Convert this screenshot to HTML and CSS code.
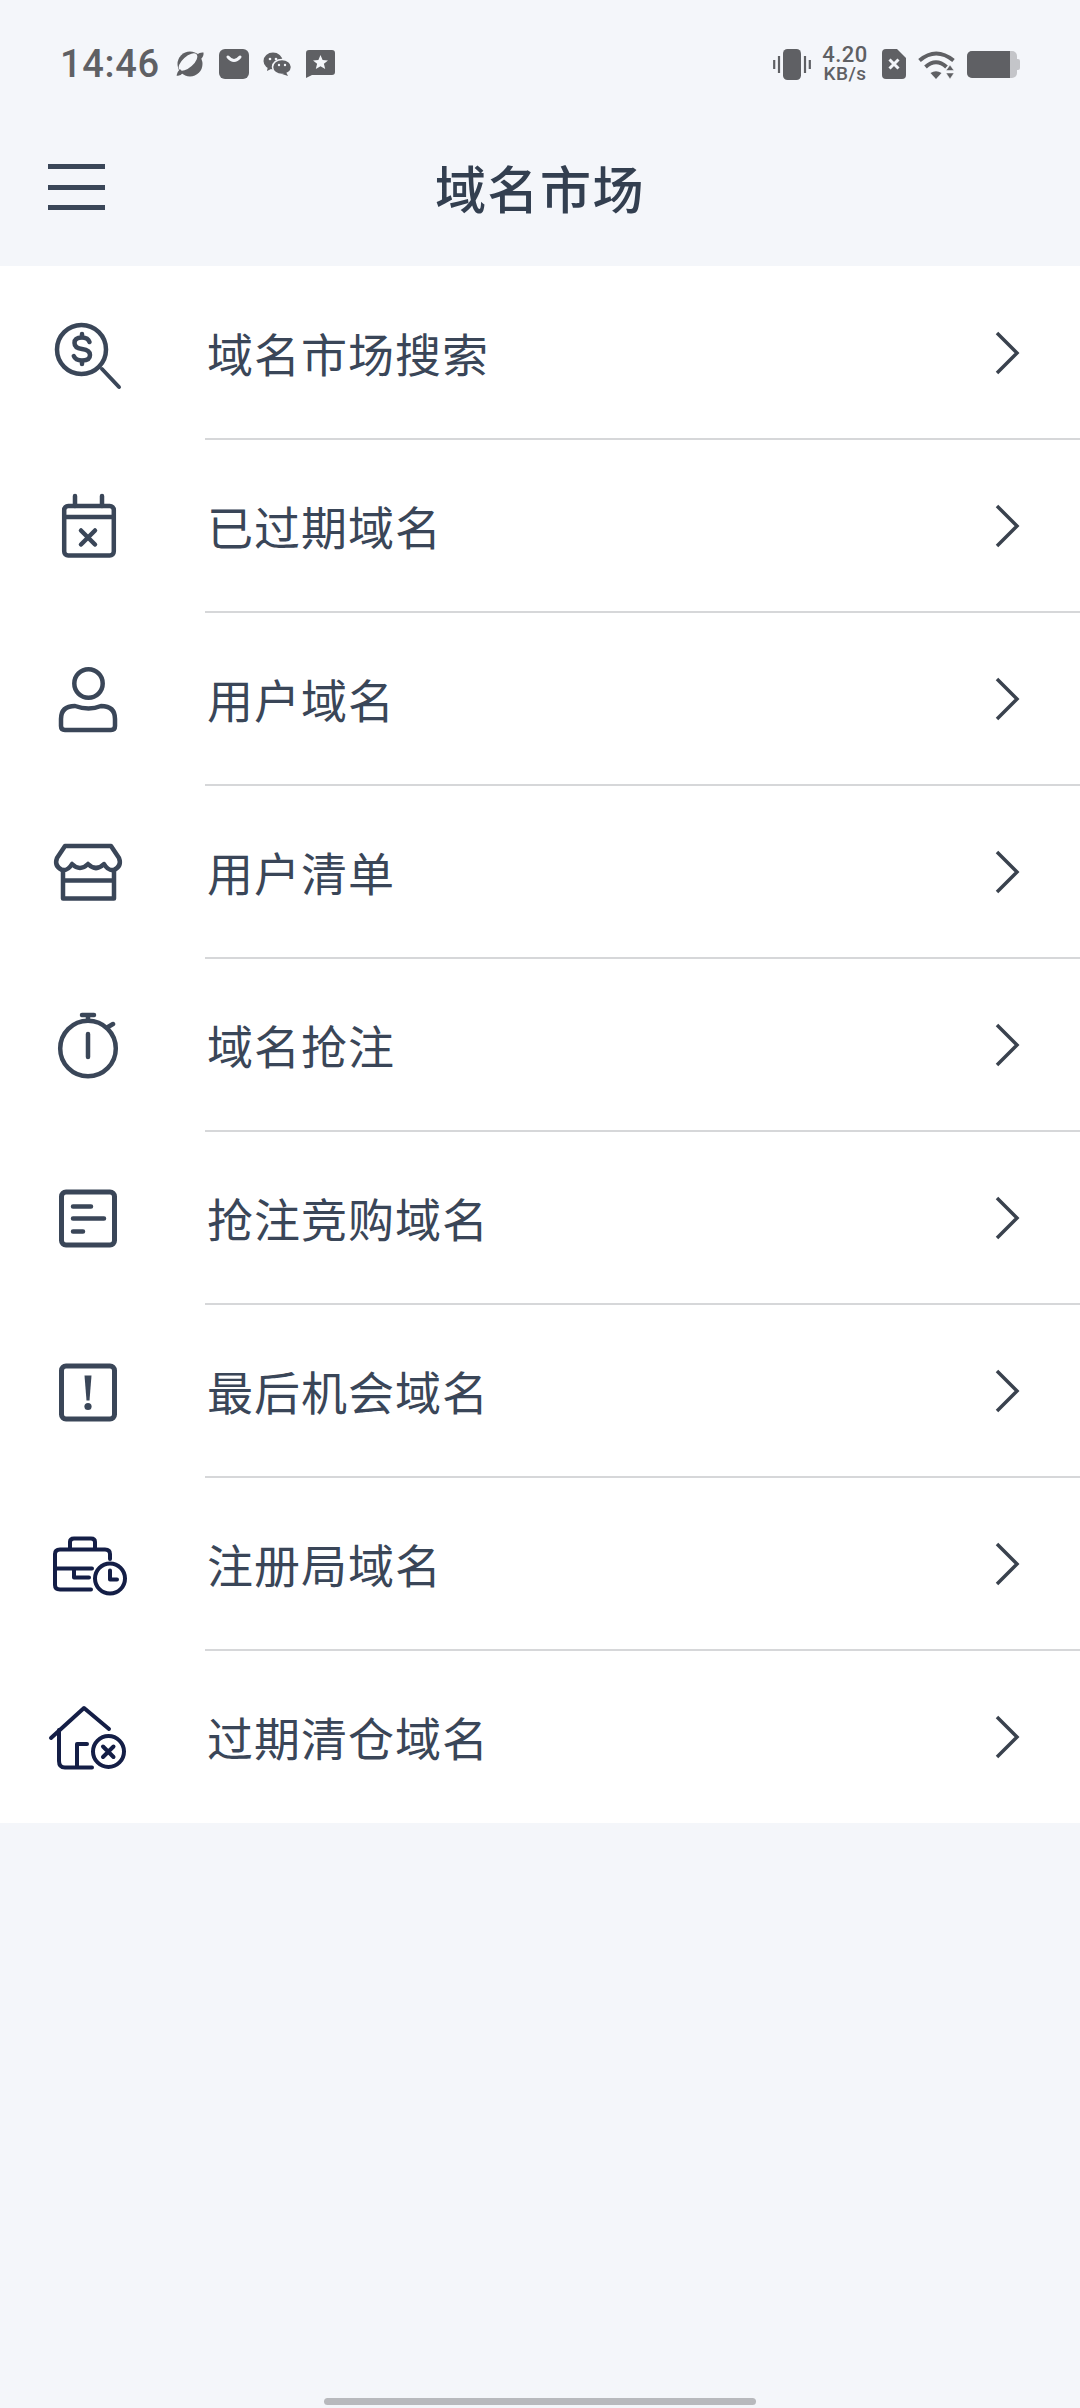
FILE: index.html
```html
<!DOCTYPE html>
<html lang="zh-CN">

<head>
    <meta charset="UTF-8" />
    <meta name="viewport" content="width=device-width, initial-scale=1.0" />
    <title>域名市场</title>
    <link rel="stylesheet" href="styles.css">
</head>

<body>
    <div class="status-bar">
        <div class="status-left">
            <span class="clock">14:46</span>
            <svg class="s-planet" viewBox="0 0 28 26"><circle cx="14" cy="13" r="12.500" fill="#5f6064"/><ellipse cx="12" cy="11" rx="11.500" ry="5.500" transform="rotate(-42 12 11)" fill="#f4f6fa"/><path d="M0.500 24.500 Q1 21 4 18 L7 22 Q4 25.500 0.500 24.500 Z M27.500 1.500 Q28 5 25 8 L21 3.500 Q24 1 27.500 1.500 Z" fill="#5f6064"/></svg>
            <svg class="s-bag" viewBox="0 0 30 30"><rect width="30" height="30" rx="6" fill="#5f6064"/><path d="M9 8 Q15 15 21 8" fill="none" stroke="#f4f6fa" stroke-width="3" stroke-linecap="round"/></svg>
            <svg class="s-wechat" viewBox="0 0 28 24"><ellipse cx="10" cy="9" rx="9.500" ry="8.500" fill="#5f6064"/><path d="M5 14 L4 19 L10 16 Z" fill="#5f6064"/><ellipse cx="19" cy="15" rx="9.500" ry="7.500" fill="#5f6064" stroke="#f4f6fa" stroke-width="1.500"/><path d="M23 20 L25 24 L19 22 Z" fill="#5f6064"/><circle cx="7" cy="7" r="1.300" fill="#f4f6fa"/><circle cx="13" cy="7" r="1.300" fill="#f4f6fa"/><circle cx="16" cy="13" r="1.200" fill="#f4f6fa"/><circle cx="22" cy="13" r="1.200" fill="#f4f6fa"/></svg>
            <svg class="s-msg" viewBox="0 0 29 28"><path d="M3 0 H26 Q29 0 29 3 V22 Q29 25 26 25 H6 L0 28 V3 Q0 0 3 0 Z" fill="#5f6064"/><path d="M14.500 5 L16.600 10 L22 10.400 L17.900 13.800 L19.200 19 L14.500 16.200 L9.800 19 L11.100 13.800 L7 10.400 L12.400 10 Z" fill="#f4f6fa"/></svg>
        </div>
        <div class="status-right">
            <svg class="s-vibrate" viewBox="0 0 38 31"><rect x="10" y="0" width="18" height="31" rx="4.500" fill="#5f6064"/><path d="M1.200 11 V20 M6 7 V24 M32 7 V24 M36.800 11 V20" stroke="#5f6064" stroke-width="2.200"/></svg>
            <div class="net-speed"><span>4.20</span><span class="net-unit">KB/s</span></div>
            <svg class="s-sim" viewBox="0 0 24 30"><path d="M4 0 H15 L24 9 V26 Q24 30 20 30 H4 Q0 30 0 26 V4 Q0 0 4 0 Z" fill="#5f6064"/><path d="M7.500 10.500 L16.500 19.500 M16.500 10.500 L7.500 19.500" stroke="#f4f6fa" stroke-width="3"/></svg>
            <svg class="s-wifi" viewBox="0 0 37 29"><g fill="none" stroke="#5f6064" stroke-width="4"><path d="M1.500 10.500 Q18 -3.500 35.500 10.500"/><path d="M7.500 17 Q18 7.500 28.500 17"/></g><path d="M12.500 23 Q18 19.500 23.500 23 L18 29 Z" fill="#5f6064"/><path d="M32 15 L36 20.500 H28 Z M28 23 H36 L32 29 Z" fill="#5f6064" stroke="#f4f6fa" stroke-width="0.500"/></svg>
            <div class="battery"><div class="battery-fill"></div></div>
        </div>
    </div>

    <header class="app-bar">
        <div class="menu-btn"><span></span><span></span><span></span></div>
        <h1>域名市场</h1>
    </header>

    <ul class="menu-list">
        <li class="menu-row">
            <svg class="row-icon" viewBox="0 0 80 80"><g fill="none" stroke="#3a4658" stroke-width="4.500" stroke-linecap="round" stroke-linejoin="round"><circle cx="33.500" cy="36.500" r="24.500"/><path d="M54 56 L71 74" stroke-width="4"/><path d="M41.500 29 Q40 24.500 34 24.500 Q26.500 24.500 26.500 30 Q26.500 35 34 36 Q42 37 42 42 Q42 47.500 34 47.500 Q27.500 47.500 25.800 43"/><path d="M34 21 V24 M34 48 V51"/></g></svg>
            <span class="row-label">域名市场搜索</span>
            <svg class="chevron" viewBox="0 0 26 44"><path d="M3 2 L23 22 L3 42" fill="none" stroke="#3a424e" stroke-width="3.500"/></svg>
        </li>
        <li class="menu-row">
            <svg class="row-icon" viewBox="0 0 80 80"><g fill="none" stroke="#3a4658" stroke-width="4.500" stroke-linecap="round" stroke-linejoin="round"><rect x="16.200" y="20" width="49.600" height="49.600" rx="4"/><path d="M16.200 31 H65.800 M27 10 V20 M54 10 V20"/><path d="M33 44.500 L47 58.500 M47 44.500 L33 58.500"/></g></svg>
            <span class="row-label">已过期域名</span>
            <svg class="chevron" viewBox="0 0 26 44"><path d="M3 2 L23 22 L3 42" fill="none" stroke="#3a424e" stroke-width="3.500"/></svg>
        </li>
        <li class="menu-row">
            <svg class="row-icon" viewBox="0 0 80 80"><g fill="none" stroke="#3a4658" stroke-width="4.500" stroke-linejoin="round"><circle cx="40.500" cy="24.500" r="14.200"/><path d="M17 71 Q13 71 13 67 V60 Q13 47 27 47 Q34 49.500 40.500 49.500 Q47 49.500 53 47 Q67 47 67 60 V67 Q67 71 63 71 Z"/></g></svg>
            <span class="row-label">用户域名</span>
            <svg class="chevron" viewBox="0 0 26 44"><path d="M3 2 L23 22 L3 42" fill="none" stroke="#3a424e" stroke-width="3.500"/></svg>
        </li>
        <li class="menu-row">
            <svg class="row-icon" viewBox="0 0 80 80"><g fill="none" stroke="#3a4658" stroke-width="4.500" stroke-linecap="round" stroke-linejoin="round"><path d="M17 14 H63 L71 26 Q74 34 66 38 Q60 39 56 32 Q48 40 40 32 Q32 40 24 32 Q20 39 14 38 Q6 34 9 26 Z"/><path d="M15 38 V66.500 H66 V38 M15 48.500 H66"/></g></svg>
            <span class="row-label">用户清单</span>
            <svg class="chevron" viewBox="0 0 26 44"><path d="M3 2 L23 22 L3 42" fill="none" stroke="#3a424e" stroke-width="3.500"/></svg>
        </li>
        <li class="menu-row">
            <svg class="row-icon" viewBox="0 0 80 80"><g fill="none" stroke="#3a4658" stroke-width="4.500" stroke-linecap="round"><circle cx="40" cy="43.500" r="27.800"/><path d="M40 15 V10 M34 10 H46 M60 22 L65 19 M40 29 V52"/></g></svg>
            <span class="row-label">域名抢注</span>
            <svg class="chevron" viewBox="0 0 26 44"><path d="M3 2 L23 22 L3 42" fill="none" stroke="#3a424e" stroke-width="3.500"/></svg>
        </li>
        <li class="menu-row">
            <svg class="row-icon" viewBox="0 0 80 80"><g fill="none" stroke="#3a4658" stroke-width="5" stroke-linecap="round"><rect x="13.500" y="14" width="53" height="53" rx="4.500"/><path d="M25 28.500 H43 M25 40.500 H56 M25 53.500 H35" stroke-width="4.500"/></g></svg>
            <span class="row-label">抢注竞购域名</span>
            <svg class="chevron" viewBox="0 0 26 44"><path d="M3 2 L23 22 L3 42" fill="none" stroke="#3a424e" stroke-width="3.500"/></svg>
        </li>
        <li class="menu-row">
            <svg class="row-icon" viewBox="0 0 80 80"><rect x="13.500" y="15" width="53" height="53" rx="4.500" fill="none" stroke="#3a4658" stroke-width="5"/><path d="M36.500 24.500 H43.500 L41.500 49.500 H38.500 Z" fill="#3a4658"/><circle cx="40" cy="55.500" r="3.600" fill="#3a4658"/></svg>
            <span class="row-label">最后机会域名</span>
            <svg class="chevron" viewBox="0 0 26 44"><path d="M3 2 L23 22 L3 42" fill="none" stroke="#3a424e" stroke-width="3.500"/></svg>
        </li>
        <li class="menu-row">
            <svg class="row-icon" viewBox="0 0 80 80"><g fill="none" stroke="#141e46" stroke-width="4" stroke-linecap="round" stroke-linejoin="round"><path d="M62 35 V30 Q62 25.500 57 25.500 H12 Q7 25.500 7 30 V61 Q7 65.500 12 65.500 H43"/><path d="M7 44.500 H44 M26 44.500 V53.500 H41 M22 25 V18 Q22 14.500 26 14.500 H43 Q47 14.500 47 18 V25"/><circle cx="62" cy="54.500" r="15"/><path d="M62 46.500 V55.500 H69"/></g></svg>
            <span class="row-label">注册局域名</span>
            <svg class="chevron" viewBox="0 0 26 44"><path d="M3 2 L23 22 L3 42" fill="none" stroke="#3a424e" stroke-width="3.500"/></svg>
        </li>
        <li class="menu-row">
            <svg class="row-icon" viewBox="0 0 80 80"><g fill="none" stroke="#141e46" stroke-width="4" stroke-linecap="round" stroke-linejoin="round"><path d="M3 41 L36 11 L61 32"/><path d="M11 33 V64 Q11 70.500 17 70.500 H44 M29 70.500 V47 H39"/><circle cx="60.500" cy="54.500" r="15.500"/><path d="M55 49.500 L65.500 60 M65.500 49.500 L55 60"/></g></svg>
            <span class="row-label">过期清仓域名</span>
            <svg class="chevron" viewBox="0 0 26 44"><path d="M3 2 L23 22 L3 42" fill="none" stroke="#3a424e" stroke-width="3.500"/></svg>
        </li>
    </ul>

    <div class="home-bar"></div>
</body>

</html>
```

FILE: styles.css
```css
* {
    box-sizing: border-box;
}

body {
    font-family: "Noto Sans CJK SC", "Noto Sans", sans-serif;
    margin: 0;
    width: 1080px;
    height: 2408px;
    background-color: #f4f6fa;
    color: #3a4658;
    display: flex;
    flex-direction: column;
    overflow: hidden;
}

/* status bar */
.status-bar {
    height: 128px;
    padding: 0 60px;
    display: flex;
    align-items: center;
    justify-content: space-between;
    flex-shrink: 0;
}

.status-left,
.status-right {
    display: flex;
    align-items: center;
}

.clock {
    font-family: Roboto, sans-serif;
    font-size: 38px;
    font-weight: 500;
    letter-spacing: 0.7px;
    color: #5f6064;
    margin-right: 16px;
}

.s-planet {
    width: 28px;
    height: 26px;
    margin-right: 15px;
}

.s-bag {
    width: 30px;
    height: 30px;
    margin-right: 14px;
}

.s-wechat {
    width: 28px;
    height: 24px;
    margin-right: 15px;
}

.s-msg {
    width: 29px;
    height: 28px;
}

.s-vibrate {
    width: 38px;
    height: 31px;
    margin-right: 11px;
}

.net-speed {
    font-family: Roboto, sans-serif;
    font-size: 22px;
    font-weight: 500;
    line-height: 19px;
    color: #5f6064;
    display: flex;
    flex-direction: column;
    align-items: center;
    width: 46px;
    letter-spacing: 0.5px;
    margin-right: 14px;
}

.net-unit {
    font-size: 19px;
}

.s-sim {
    width: 24px;
    height: 30px;
    margin-right: 12px;
}

.s-wifi {
    width: 37px;
    height: 29px;
    margin-right: 12px;
}

.battery {
    width: 50px;
    height: 27px;
    border-radius: 5px;
    background-color: #c4c5c9;
    margin-right: 3px;
    position: relative;
}

.battery::after {
    content: "";
    position: absolute;
    right: -3px;
    top: 8px;
    width: 3px;
    height: 11px;
    border-radius: 0 2px 2px 0;
    background-color: #c4c5c9;
}

.battery-fill {
    width: 43px;
    height: 100%;
    border-radius: 5px 0 0 5px;
    background-color: #5f6064;
}

/* app bar */
.app-bar {
    height: 138px;
    padding: 0 0 20px 48px;
    display: flex;
    align-items: center;
    position: relative;
    flex-shrink: 0;
}

.menu-btn {
    width: 57px;
    height: 46px;
    display: flex;
    flex-direction: column;
    justify-content: space-between;
}

.menu-btn span {
    height: 5px;
    background-color: #3a4658;
}

h1 {
    position: absolute;
    left: 0;
    right: 0;
    margin: 0;
    text-align: center;
    font-size: 51px;
    font-weight: 500;
    letter-spacing: 1.5px;
    line-height: 1;
    color: #333f50;
}

/* list */
.menu-list {
    list-style: none;
    margin: 0;
    padding: 0;
    background-color: #ffffff;
    flex-shrink: 0;
}

.menu-row {
    height: 173px;
    display: flex;
    align-items: center;
    padding-left: 48px;
    position: relative;
}

.menu-row + .menu-row::before {
    content: "";
    position: absolute;
    top: -1px;
    left: 205px;
    right: 0;
    height: 2px;
    background-color: #d6d7d9;
}

.row-icon {
    width: 80px;
    height: 80px;
    margin-right: 79px;
    flex-shrink: 0;
}

.row-label {
    font-size: 46px;
    letter-spacing: 1px;
    padding-bottom: 1px;
    flex: 1;
}

.chevron {
    width: 26px;
    height: 44px;
    margin-right: 60px;
}

.home-bar {
    margin: auto auto 3px;
    width: 432px;
    height: 7px;
    border-radius: 4px;
    background-color: #b8b9bd;
}
```
